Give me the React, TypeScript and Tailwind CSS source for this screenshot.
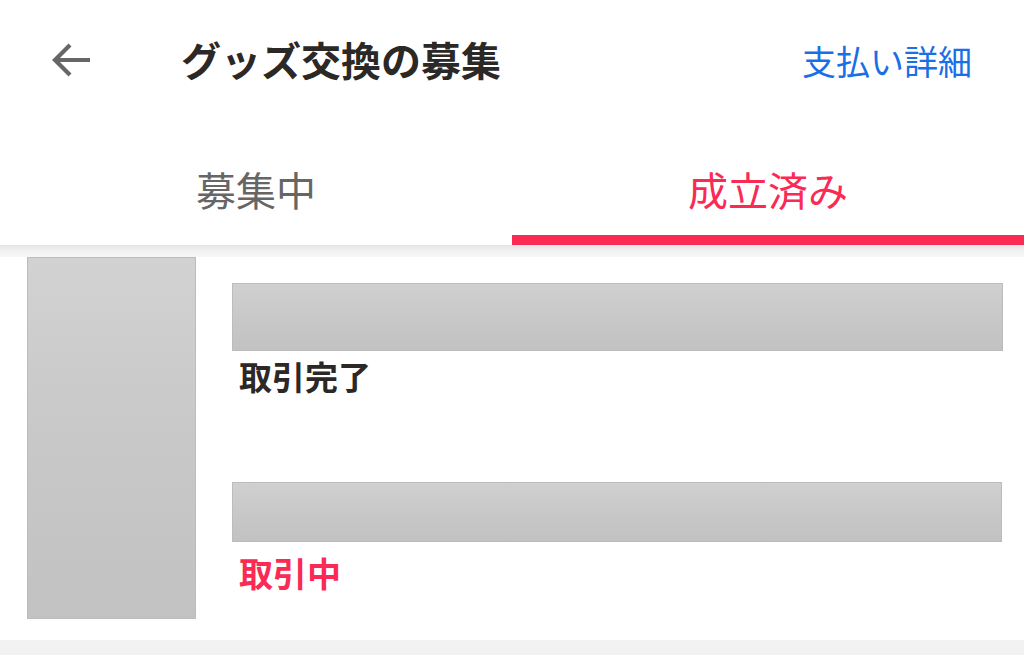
import React from "react";

const font = { fontFamily: '"Noto Sans CJK JP", "Noto Sans", sans-serif' };

export default function App() {
  return (
    <div className="w-[1024px] h-[655px] bg-[#f2f2f2] overflow-hidden" style={font}>
      {/* Header */}
      <div className="h-[122px] bg-white flex items-center pl-[50px] pr-[52px] pb-[4px]">
        <svg width="42" height="42" viewBox="0 0 42 42" className="shrink-0 mt-[2px]">
          <path d="M40 21H5M20 6L5 21l15 15" fill="none" stroke="#666666" strokeWidth="4.2" strokeLinecap="butt" strokeLinejoin="miter" />
        </svg>
        <div className="ml-[89px] text-[40px] leading-none font-bold text-[#2b2826]">グッズ交換の募集</div>
        <div className="ml-auto mt-[3px] text-[34px] leading-none text-[#1a6fe6]">支払い詳細</div>
      </div>
      {/* Tabs */}
      <div className="grid grid-cols-2 bg-white h-[123px]">
        <div className="flex justify-center border-b-[10px] border-transparent">
          <span className="pt-[47px] text-[40px] leading-none text-[#666666]">募集中</span>
        </div>
        <div className="flex justify-center border-b-[10px] border-[#fa2a55]">
          <span className="pt-[47px] text-[40px] leading-none text-[#fa2a55]">成立済み</span>
        </div>
      </div>
      {/* Shadow band */}
      <div className="h-[12px] bg-gradient-to-b from-[#e4e4e4] via-[#f2f2f2] to-[#f7f7f7]" />
      {/* Card */}
      <div className="bg-white h-[383px] flex pl-[27px] pr-[21px] pb-[21px]">
        <div className="w-[169px] h-[362px] shrink-0 border border-[#bcbcbc] bg-gradient-to-b from-[#d2d2d2] via-[#c8c8c8] to-[#c2c2c2]" />
        <div className="flex-1 ml-[36px] flex flex-col">
          <div className="mt-[26px] h-[68px] border border-[#bcbcbc] bg-gradient-to-b from-[#d0d0d0] via-[#c8c8c8] to-[#c2c2c2]" />
          <div className="mt-[9px] ml-[7px] text-[33px] leading-none font-bold text-[#2b2826]">取引完了</div>
          <div className="mt-[89px] h-[60px] mr-[1px] border border-[#bcbcbc] bg-gradient-to-b from-[#d0d0d0] via-[#c8c8c8] to-[#c2c2c2]" />
          <div className="mt-[14px] ml-[7px] text-[34px] leading-none font-bold text-[#fa2a55]">取引中</div>
        </div>
      </div>
    </div>
  );
}
